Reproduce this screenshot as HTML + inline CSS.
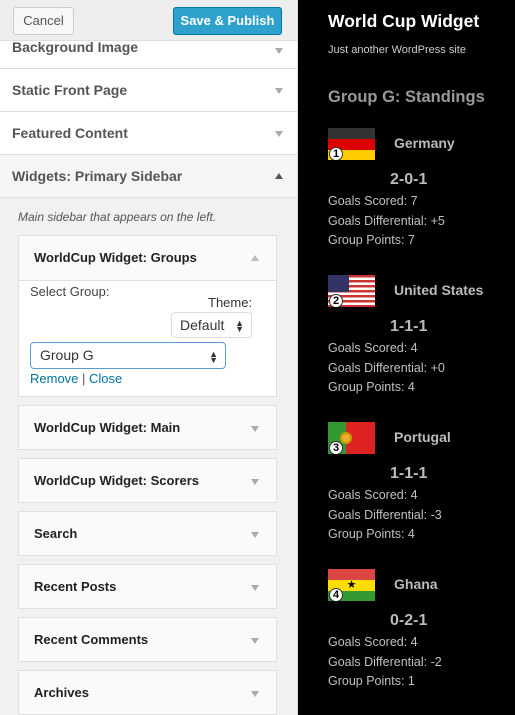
<!DOCTYPE html>
<html><head><style>
*{margin:0;padding:0;box-sizing:border-box}
body{width:515px;height:715px;overflow:hidden;font-family:"Liberation Sans",sans-serif;background:#000;position:relative}
#L{position:absolute;left:0;top:0;width:298px;height:715px;background:#f1f1f1;border-right:1px solid #ddd}
.hdr{position:absolute;left:0;top:0;width:297px;height:41px;background:#eee;border-bottom:1px solid #ddd}
.btn{position:absolute;top:7px;height:28px;border-radius:3px;font-size:13px;line-height:26px;text-align:center}
.cancel{left:13px;width:61px;background:#f7f7f7;border:1px solid #ccc;color:#555}
.save{left:173px;width:109px;background:#2ea2cc;border:1px solid #0074a2;color:#fff}
.sec{position:absolute;left:0;width:297px;background:#fff;border-bottom:1px solid #ddd;font-size:14px;font-weight:bold;color:#555;padding-left:12px}
.sec .ar{position:absolute;right:14px;width:0;height:0;border-left:4px solid transparent;border-right:4px solid transparent;border-top:6px solid #aaa}
.desc{position:absolute;left:18px;top:210px;font-size:12px;font-style:italic;color:#555}
.wb{position:absolute;left:18px;width:259px;height:45px;background:#fafafa;border:1px solid #e0e0e0;font-size:13px;font-weight:bold;color:#222;padding-left:15px;line-height:43px}
.wb .ar{position:absolute;right:17px;top:20px;width:0;height:0;border-left:4px solid transparent;border-right:4px solid transparent;border-top:6px solid #aaa}
.sel{position:absolute;background:#fff;border:1px solid #ddd;border-radius:4px;font-size:14px;color:#333}
.sel i{position:absolute;right:7px;font-style:normal;font-size:9px;line-height:6px;color:#333}
#R{position:absolute;left:298px;top:0;width:217px;height:715px;color:#bbb}
.t{position:absolute;white-space:nowrap}
.st{font-size:12.5px;line-height:19.5px;color:#c0c0c0}
.flag{position:absolute;left:30px;width:47px;height:32px;overflow:hidden}
.num{position:absolute;left:1px;bottom:-1px;width:14px;height:14px;border-radius:7px;background:#fff;border:1px solid #333;color:#000;font-size:11px;font-weight:bold;text-align:center;line-height:12px}
</style></head><body>
<div id="L">
<div class="sec" style="top:41px;height:28px;line-height:12px">Background Image<span class="ar" style="top:7px"></span></div>
<div class="sec" style="top:69px;height:43px;line-height:42px">Static Front Page<span class="ar" style="top:19px"></span></div>
<div class="sec" style="top:112px;height:43px;line-height:42px">Featured Content<span class="ar" style="top:19px"></span></div>
<div class="sec" style="top:155px;height:43px;line-height:42px;background:#f5f5f5">Widgets: Primary Sidebar<span class="ar" style="top:18px;border-top:0;border-bottom:6px solid #555"></span></div>
<div class="hdr"><div class="btn cancel">Cancel</div><div class="btn save" style="font-weight:bold">Save &amp; Publish</div></div>
<div class="desc">Main sidebar that appears on the left.</div>
<div style="position:absolute;left:18px;top:235px;width:259px;height:162px;background:#fff;border:1px solid #e0e0e0">
 <div style="height:45px;background:#fafafa;border-bottom:1px solid #e0e0e0;font-size:13px;font-weight:bold;color:#222;padding-left:15px;line-height:44px;position:relative">WorldCup Widget: Groups<span style="position:absolute;right:17px;top:19px;border-left:4px solid transparent;border-right:4px solid transparent;border-bottom:6px solid #bbb"></span></div>
 <div class="t" style="left:11px;top:48px;font-size:13px;color:#444">Select Group:</div>
 <div class="t" style="left:189px;top:59px;font-size:13px;color:#333">Theme:</div>
 <div class="sel" style="left:152px;top:76px;width:81px;height:26px;line-height:24px;padding-left:8px">Default<i style="top:7px">▲<br>▼</i></div>
 <div class="sel" style="left:11px;top:106px;width:196px;height:27px;line-height:25px;padding-left:9px;border-color:#5b9dd9">Group G<i style="top:8px">▲<br>▼</i></div>
 <div class="t" style="left:11px;top:135px;font-size:13px;color:#0074a2">Remove <span style="color:#555">|</span> Close</div>
</div>
<div class="wb" style="top:405px">WorldCup Widget: Main<span class="ar"></span></div>
<div class="wb" style="top:458px">WorldCup Widget: Scorers<span class="ar"></span></div>
<div class="wb" style="top:511px">Search<span class="ar"></span></div>
<div class="wb" style="top:564px">Recent Posts<span class="ar"></span></div>
<div class="wb" style="top:617px">Recent Comments<span class="ar"></span></div>
<div class="wb" style="top:670px">Archives<span class="ar"></span></div>
</div>

<div id="R">
<div class="t" style="left:30px;top:11px;font-size:17.5px;font-weight:bold;color:#fff">World Cup Widget</div>
<div class="t" style="left:30px;top:44px;font-size:11px;color:#ccc">Just another WordPress site</div>
<div class="t" style="left:30px;top:88px;font-size:16.5px;font-weight:bold;color:#999">Group G: Standings</div>

<div style="position:absolute;left:0;top:128px;width:217px;height:120px">
 <div class="flag" style="top:0"><div style="height:11px;background:#333"></div><div style="height:11px;background:#d00"></div><div style="height:10px;background:#fc0"></div><div class="num">1</div></div>
 <div class="t" style="left:96px;top:7px;font-size:14px;font-weight:bold">Germany</div>
 <div class="t" style="left:92px;top:43px;font-size:16px;font-weight:bold">2-0-1</div>
 <div class="t st" style="left:30px;top:64px">Goals Scored: 7<br>Goals Differential: +5<br>Group Points: 7</div>
</div>

<div style="position:absolute;left:0;top:275px;width:217px;height:120px">
 <div class="flag" style="top:0;background:repeating-linear-gradient(#c33 0 2.5px,#fff 2.5px 5px)"><div style="position:absolute;left:0;top:0;width:21px;height:17px;background:#336"></div><div class="num">2</div></div>
 <div class="t" style="left:96px;top:7px;font-size:14px;font-weight:bold">United States</div>
 <div class="t" style="left:92px;top:43px;font-size:16px;font-weight:bold">1-1-1</div>
 <div class="t st" style="left:30px;top:64px">Goals Scored: 4<br>Goals Differential: +0<br>Group Points: 4</div>
</div>

<div style="position:absolute;left:0;top:422px;width:217px;height:120px">
 <div class="flag" style="top:0;background:linear-gradient(90deg,#393 0 18px,#d22 18px)"><div style="position:absolute;left:12px;top:10px;width:12px;height:12px;border-radius:6px;background:#ea3;border:2px solid #c90"></div><div class="num">3</div></div>
 <div class="t" style="left:96px;top:7px;font-size:14px;font-weight:bold">Portugal</div>
 <div class="t" style="left:92px;top:43px;font-size:16px;font-weight:bold">1-1-1</div>
 <div class="t st" style="left:30px;top:64px">Goals Scored: 4<br>Goals Differential: -3<br>Group Points: 4</div>
</div>

<div style="position:absolute;left:0;top:569px;width:217px;height:120px">
 <div class="flag" style="top:0"><div style="height:11px;background:#d44"></div><div style="height:11px;background:#fd0;text-align:center;font-size:11px;line-height:11px;color:#000">★</div><div style="height:10px;background:#393"></div><div class="num">4</div></div>
 <div class="t" style="left:96px;top:7px;font-size:14px;font-weight:bold">Ghana</div>
 <div class="t" style="left:92px;top:43px;font-size:16px;font-weight:bold">0-2-1</div>
 <div class="t st" style="left:30px;top:64px">Goals Scored: 4<br>Goals Differential: -2<br>Group Points: 1</div>
</div>
</div>
</body></html>
